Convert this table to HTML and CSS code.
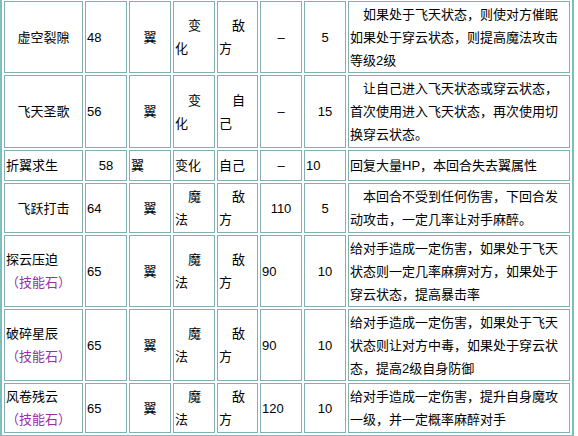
FILE: index.html
```html
<!DOCTYPE html>
<html lang="zh">
<head>
<meta charset="utf-8">
<link rel="stylesheet" href="styles.css">
</head>
<body>
<table class="skills">
  <colgroup>
    <col class="w-name"><col class="w-lv"><col class="w-attr"><col class="w-cat"><col class="w-tgt"><col class="w-pow"><col class="w-pp"><col class="w-desc">
  </colgroup>
  <tr class="h72">
    <td class="c">虚空裂隙</td>
    <td>48</td>
    <td class="c">翼</td>
    <td>　变化</td>
    <td>　敌方</td>
    <td class="c">–</td>
    <td class="c">5</td>
    <td>　如果处于飞天状态，则使对方催眠如果处于穿云状态，则提高魔法攻击等级2级</td>
  </tr>
  <tr class="h73">
    <td class="c">飞天圣歌</td>
    <td>56</td>
    <td class="c">翼</td>
    <td>　变化</td>
    <td>　自己</td>
    <td class="c">–</td>
    <td class="c">15</td>
    <td>　让自己进入飞天状态或穿云状态，首次使用进入飞天状态，再次使用切换穿云状态。</td>
  </tr>
  <tr class="h31">
    <td>折翼求生</td>
    <td class="c">58</td>
    <td>翼</td>
    <td>变化</td>
    <td>自己</td>
    <td class="c">–</td>
    <td>10</td>
    <td>回复大量HP，本回合失去翼属性</td>
  </tr>
  <tr class="h50">
    <td class="c">飞跃打击</td>
    <td>64</td>
    <td class="c">翼</td>
    <td>　魔法</td>
    <td>　敌方</td>
    <td class="c">110</td>
    <td class="c">5</td>
    <td>　本回合不受到任何伤害，下回合发动攻击，一定几率让对手麻醉。</td>
  </tr>
  <tr class="h72">
    <td>探云压迫<br><span class="stone">（技能石）</span></td>
    <td>65</td>
    <td class="c">翼</td>
    <td>　魔法</td>
    <td>　敌方</td>
    <td>90</td>
    <td class="c">10</td>
    <td>给对手造成一定伤害，如果处于飞天状态则一定几率麻痹对方，如果处于穿云状态，提高暴击率</td>
  </tr>
  <tr class="h72">
    <td>破碎星辰<br><span class="stone">（技能石）</span></td>
    <td>65</td>
    <td class="c">翼</td>
    <td>　魔法</td>
    <td>　敌方</td>
    <td>90</td>
    <td class="c">10</td>
    <td>给对手造成一定伤害，如果处于飞天状态则让对方中毒，如果处于穿云状态，提高2级自身防御</td>
  </tr>
  <tr class="h50">
    <td>风卷残云<br><span class="stone">（技能石）</span></td>
    <td>65</td>
    <td class="c">翼</td>
    <td>　魔法</td>
    <td>　敌方</td>
    <td>120</td>
    <td class="c">10</td>
    <td>给对手造成一定伤害，提升自身魔攻一级，并一定概率麻醉对手</td>
  </tr>
</table>
</body>
</html>
```

FILE: styles.css
```css
html, body {
  margin: 0;
  padding: 0;
  background: #ffffff;
}

body {
  font-family: "Liberation Sans", "Noto Sans CJK SC", sans-serif;
  font-size: 13px;
  color: #000000;
}

.skills {
  border-collapse: separate;
  border-spacing: 2px;
  border: 2px solid #7fbcbf;
  table-layout: fixed;
  width: 574px;
  margin-top: -3px;
}

.w-name { width: 79px; }
.w-lv { width: 42px; }
.w-attr { width: 42px; }
.w-cat { width: 42px; }
.w-tgt { width: 41px; }
.w-pow { width: 42px; }
.w-pp { width: 42px; }
.w-desc { width: 222px; }

.skills td {
  border: 1px solid #84aeb2;
  padding: 0 1px;
  line-height: 23px;
  vertical-align: middle;
  text-align: left;
  word-break: break-all;
}

.skills td.c {
  text-align: center;
}

.h72 { height: 72px; }
.h73 { height: 73px; }
.h31 { height: 31px; }
.h50 { height: 50px; }

.stone {
  color: #9b2fa6;
}
```
